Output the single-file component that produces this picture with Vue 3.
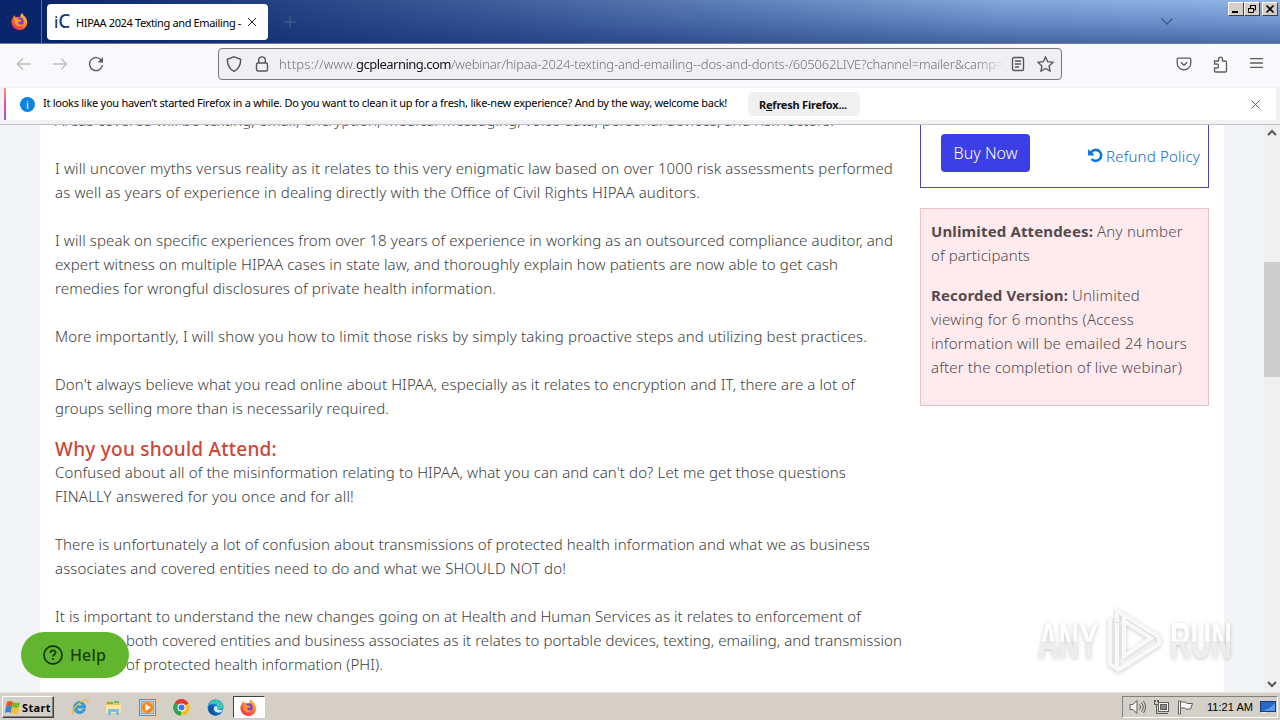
<template>
  <div class="screen">
    <header class="tabbar">
      <div class="pinned">
        <svg width="17" height="17" viewBox="0 0 24 24">
          <defs>
            <linearGradient id="fox" x1="1" y1="0" x2="0.2" y2="1">
              <stop offset="0" stop-color="#ffe04a" />
              <stop offset="0.45" stop-color="#ff8a22" />
              <stop offset="1" stop-color="#f5265c" />
            </linearGradient>
          </defs>
          <path d="M3 6l1-3 3 3c2-1 4-1 6 0 0-3 1-5 3-6 0 3 5 5 6 9 3 7-2 15-10 15S-1 16 1 10z" fill="url(#fox)" />
          <circle cx="12.5" cy="12" r="5.600" fill="#8440c8" />
          <path d="M4 8c3-1 5 0 7 1l4 1c-1 3-4 2-5 4 1 3 5 3 7 1-1 4-8 5-11 1-2-3-1-6-2-8z" fill="#ff9a2b" />
        </svg>
      </div>
      <div class="tab">
        <span class="favicon"><span class="favicon-i">i</span>C</span>
        <span class="tab-title" v-fit="165">HIPAA 2024 Texting and Emailing -</span>
        <svg class="tab-close" width="10" height="10" viewBox="0 0 10 10"><path d="M1 1l8 8M9 1L1 9" /></svg>
      </div>
      <svg class="new-tab" width="12" height="12" viewBox="0 0 12 12"><path d="M6 0v12M0 6h12" /></svg>
      <svg class="tabs-menu" width="14" height="9" viewBox="0 0 14 9"><path d="M1.500 1.500L7 7l5.500-5.500" /></svg>
      <div class="window-buttons">
        <span class="win-btn"><svg width="12" height="10" viewBox="0 0 12 10"><path d="M2 8h6" stroke-width="2" /></svg></span>
        <span class="win-btn"><svg width="12" height="10" viewBox="0 0 12 10"><path d="M4 1.500h6M4.500 1v3M9.500 1v5H7M2 4.500h6M2.500 4v4.500h5V4" /></svg></span>
        <span class="win-btn last"><svg width="12" height="10" viewBox="0 0 12 10"><path d="M2.500 1.500l7 7M9.500 1.500l-7 7" stroke-width="1.700" /></svg></span>
      </div>
    </header>

    <nav class="toolbar">
      <svg class="nav-icon disabled" width="16" height="16" viewBox="0 0 16 16"><path d="M15 8H1.500M7 2.500L1.500 8 7 13.500" /></svg>
      <svg class="nav-icon disabled" width="16" height="16" viewBox="0 0 16 16"><path d="M1 8h13.500M9 2.500L14.500 8 9 13.500" /></svg>
      <svg class="nav-icon" width="16" height="16" viewBox="0 0 16 16"><path d="M13.500 4.500A6.500 6.500 0 1 0 14.500 9" /><path d="M15 1v5.500H9.500z" class="solid" /></svg>
      <div class="urlbar">
        <svg width="16" height="16" viewBox="0 0 16 16"><path d="M8 .8l6.700 2.500c0 5.500-1.200 9.500-6.700 12C2.500 12.800 1.300 8.800 1.300 3.300z" /></svg>
        <svg class="lock" width="14" height="16" viewBox="0 0 14 16"><rect x="1.500" y="7" width="11" height="8" rx="1.500" /><path d="M3.700 7V4.200a3.300 3.300 0 0 1 6.600 0V7" /></svg>
        <div class="url">
          <span v-fit="77">https://www.</span><b><span v-fit="95">gcplearning.com</span></b><span v-fit="552">/webinar/hipaa-2024-texting-and-emailing--dos-and-donts-/605062LIVE?channel=mailer&amp;camp=</span>
        </div>
        <svg class="reader" width="14" height="16" viewBox="0 0 14 16"><rect x="1.500" y="1.500" width="11" height="13" rx="1.500" /><path d="M4 5h6M4 8h6M4 11h4" /></svg>
        <svg width="17" height="16" viewBox="0 0 17 16"><path d="M8.500 1l2.200 4.700 5.100.7-3.700 3.500.9 5.100-4.500-2.500L4 15l.9-5.100L1.200 6.400l5.100-.7z" /></svg>
      </div>
      <div class="tools">
        <svg width="16" height="14" viewBox="0 0 16 14"><path d="M2.500 1.200h11q1.300 0 1.300 1.300V6c0 9-13.600 9-13.600 0V2.500q0-1.300 1.300-1.300z" /><path d="M4.800 5.200L8 8.300l3.200-3.100" /></svg>
        <svg width="16" height="17" viewBox="0 0 16 17"><path d="M1.500 5h4V3.200a2 2 0 0 1 4 0V5h2.800q1.200 0 1.200 1.200v8.600q0 1.200-1.200 1.200H2.700q-1.200 0-1.200-1.200V12h2a2 2 0 0 0 0-4h-2z" /></svg>
        <svg width="13" height="12" viewBox="0 0 13 12"><path d="M0 .7h13M0 5h13M0 9.300h13" /></svg>
      </div>
    </nav>

    <div class="notice-wrap">
      <div class="notice">
        <span class="info">i</span>
        <span class="notice-text" v-fit="684">It looks like you haven’t started Firefox in a while. Do you want to clean it up for a fresh, like-new experience? And by the way, welcome back!</span>
        <button class="refresh"><span v-fit="88">R<u>e</u>fresh Firefox...</span></button>
        <svg class="notice-close" width="9" height="9" viewBox="0 0 9 9"><path d="M.5.5l8 8M8.500.5l-8 8" /></svg>
      </div>
    </div>

    <main class="viewport">
      <div class="page">
        <article class="article">
          <template v-for="(line, i) in lines" :key="i">
            <h3 v-if="line.heading"><span v-fit="line.width">{{ line.text }}</span></h3>
            <p v-else :class="{ 'para-end': line.end, indent: line.indent }"><span v-fit="line.width">{{ line.text }}</span></p>
          </template>
        </article>
        <aside class="sidebar">
          <div class="buy-box">
            <button class="buy"><span v-fit="64">Buy Now</span></button>
            <a class="refund">
              <svg width="15" height="15" viewBox="0 0 15 15"><path d="M3 4.500A5.500 5.500 0 1 1 3.500 11" /><path d="M0 1v6.500h6.500L4.500 5 2 3z" class="solid" /></svg>
              <span v-fit="94">Refund Policy</span>
            </a>
          </div>
          <div class="info-box">
            <p><strong><span v-fit="162">Unlimited Attendees:</span></strong> <span v-fit="86">Any number</span></p>
            <p class="gap"><span v-fit="99">of participants</span></p>
            <p><strong><span v-fit="137">Recorded Version:</span></strong> <span v-fit="68">Unlimited</span></p>
            <p><span v-fit="203">viewing for 6 months (Access</span></p>
            <p><span v-fit="256">information will be emailed 24 hours</span></p>
            <p><span v-fit="251">after the completion of live webinar)</span></p>
          </div>
        </aside>
      </div>
      <div class="scrollbar">
        <svg width="10" height="7" viewBox="0 0 10 7"><path d="M1 6l4-4 4 4" /></svg>
        <div class="thumb"></div>
        <svg class="down" width="10" height="7" viewBox="0 0 10 7"><path d="M1 1l4 4 4-4" /></svg>
      </div>

      <button class="help">
        <svg width="20" height="20" viewBox="0 0 20 20"><circle cx="10" cy="10" r="9" /><path d="M7.500 8c0-3.500 5.300-3.300 5.100-.3-.1 1.800-2.600 1.800-2.600 3.800" /><path d="M10 13v2" /></svg>
        <span v-fit="36">Help</span>
      </button>

      <div class="watermark">
        <span class="mark-word"><span class="mark-text">ANY</span></span>
        <svg width="58" height="66" viewBox="0 0 58 66"><path d="M4 10v46l7 5V15M11 14V3l42 26M18 8v40l27-18-27-17M53 29v7L14 61l-3-2" /></svg>
        <span class="mark-word"><span class="mark-text">RUN</span></span>
      </div>
    </main>

    <footer class="taskbar">
      <button class="start">
        <svg width="16" height="15" viewBox="0 0 16 15">
          <path d="M2 2q3-2 6 0L7 7Q4 5 1 7z" fill="#e8552b" />
          <path d="M8 2q4 2 7 0l-1 5q-3 2-7 0z" fill="#75b82e" />
          <path d="M1 7q3-2 6 0l-1 6q-3-2-6 0z" fill="#2f86dc" />
          <path d="M7 7q4 2 7 0l-1 6q-3 2-7 0z" fill="#f6c02a" />
        </svg>
        <span v-fit="29">Start</span>
      </button>
      <div class="apps">
        <span class="app">
          <svg width="18" height="18" viewBox="0 0 18 18">
            <path d="M14.500 10H5.500c.5 4 5 4 6.300 1.700h2.500C11 18 2.500 16 2.700 9.300 3 2 14.500 1 14.500 10zM5.700 7.800h6c-.7-3.300-5.200-3.300-6 0z" fill="#36a5e3" stroke="#2a90cd" stroke-width="1" />
            <path d="M2 16C-1 12 12 0 16.500 2c1 .5.500 2-.3 3" stroke="#eebb35" stroke-width="1.300" />
          </svg>
        </span>
        <span class="app">
          <svg width="17" height="17" viewBox="0 0 17 17">
            <path d="M1 4l1-2h5l1 2h7v10H1z" fill="#e9c662" />
            <path d="M2 4h6M9 3h5" stroke="#58a951" stroke-width="1.500" />
            <path d="M1 6h15v8H1z" fill="#fae7a0" />
            <path d="M3 16v-5q0-1 1-1h9q1 0 1 1v5h-3v-3H6v3z" fill="#80bddd" />
          </svg>
        </span>
        <span class="app">
          <svg width="17" height="17" viewBox="0 0 17 17">
            <rect x=".5" y=".5" width="16" height="16" fill="#b8dcf3" stroke="#4d93cc" />
            <rect x="2.500" y="2.500" width="12" height="12" fill="#e9c08c" stroke="#77addb" />
            <circle cx="8.500" cy="8.500" r="5.500" fill="#f38a16" />
            <path d="M6.500 5l5.500 3.500L6.500 12z" fill="#fff" />
          </svg>
        </span>
        <span class="app">
          <svg width="17" height="17" viewBox="0 0 17 17">
            <path d="M8.500 8.500L1.500 4A8 8 0 0 1 15.500 4.500z" fill="#e33b2e" />
            <path d="M8.500 8.500L1.500 4A8 8 0 0 0 8 16.500l4-6z" fill="#2da44e" />
            <path d="M8.500 8.500l7-4A8 8 0 0 1 8 16.500z" fill="#fbc116" />
            <circle cx="8.500" cy="8.500" r="4" fill="#fff" />
            <circle cx="8.500" cy="8.500" r="3" fill="#3e79e6" />
          </svg>
        </span>
        <span class="app">
          <svg width="17" height="17" viewBox="0 0 17 17">
            <circle cx="8.500" cy="8.500" r="8" fill="#1676c8" />
            <path d="M1 7C2-1 16-1 16.500 7c.3 4-5.500 4.500-6.500 2.500C12 5 5 3 1 7z" fill="#3fc5b4" />
            <path d="M10 9.500c.7 2 4.500 2.300 6 .7-.4 3-3.500 4-6 3-3-1-4-4-2-6 2-.5 3 1 2 2.300z" fill="#d4e9ef" />
            <path d="M6.500 7.500c-2 5 2 9 7 7.500-6 4-13-1-12-7 1-2 3-2 5-.5z" fill="#1553a0" />
          </svg>
        </span>
        <span class="app active">
          <svg width="17" height="17" viewBox="0 0 24 24">
            <path d="M3 6l1-3 3 3c2-1 4-1 6 0 0-3 1-5 3-6 0 3 5 5 6 9 3 7-2 15-10 15S-1 16 1 10z" fill="url(#fox)" />
            <circle cx="12.500" cy="12" r="5.600" fill="#8440c8" />
            <path d="M4 8c3-1 5 0 7 1l4 1c-1 3-4 2-5 4 1 3 5 3 7 1-1 4-8 5-11 1-2-3-1-6-2-8z" fill="#ff9a2b" />
          </svg>
        </span>
      </div>
      <div class="tray">
        <svg width="17" height="14" viewBox="0 0 17 14"><path d="M1 4.500h3l4-4v13l-4-4H1z" class="white" /><path d="M10.500 4.500q2 2.500 0 5M12.500 2.500q3.500 4.500 0 9M14.500 1q4 6 0 12" /></svg>
        <svg width="17" height="16" viewBox="0 0 17 16"><rect x="5.500" y="3.500" width="10" height="9" class="white" /><rect x="7.500" y="5.500" width="6" height="5" class="screen-fill" /><path d="M8 14.500h7" /><path d="M1.500 1v4.500h4V1M2.500 1v2M4.500 1v2M3.500 6v8.500H8" /></svg>
        <svg width="17" height="15" viewBox="0 0 17 15"><path d="M1.500 1v13h2V1zM3.500 2h5l1.500 1.500h5.500L13.500 9H9L7.500 8h-4z" class="white" /></svg>
        <span class="clock" v-fit="46">11:21 AM</span>
        <svg width="16" height="14" viewBox="0 0 16 14"><rect x=".5" y="1.500" width="15" height="10" fill="#2769c9" stroke="#173c7d" /><path d="M1 11q8-1 14-8v8z" fill="#5a9ae9" stroke="none" /><path d="M2 12.500h4" stroke="#e7eef8" /></svg>
      </div>
    </footer>
  </div>
</template>

<script setup>
import { ref } from 'vue'

// spreads the letters of a line so that it takes the given width
const vFit = {
  mounted(el, { value }) {
    const range = document.createRange()
    range.selectNodeContents(el)
    const natural = range.getBoundingClientRect().width
    el.style.letterSpacing = (value - natural) / el.textContent.length + 'px'
  },
}

const lines = ref([
  { text: 'Areas covered will be texting, email, encryption, medical messaging, voice data, personal devices, and risk factors.', width: 779, end: true },
  { text: 'I will uncover myths versus reality as it relates to this very enigmatic law based on over 1000 risk assessments performed', width: 838 },
  { text: 'as well as years of experience in dealing directly with the Office of Civil Rights HIPAA auditors.', width: 645, end: true },
  { text: 'I will speak on specific experiences from over 18 years of experience in working as an outsourced compliance auditor, and', width: 838 },
  { text: 'expert witness on multiple HIPAA cases in state law, and thoroughly explain how patients are now able to get cash', width: 783 },
  { text: 'remedies for wrongful disclosures of private health information.', width: 441, end: true },
  { text: 'More importantly, I will show you how to limit those risks by simply taking proactive steps and utilizing best practices.', width: 812, end: true },
  { text: "Don't always believe what you read online about HIPAA, especially as it relates to encryption and IT, there are a lot of", width: 800 },
  { text: 'groups selling more than is necessarily required.', width: 334 },
  { text: 'Why you should Attend:', width: 222, heading: true },
  { text: "Confused about all of the misinformation relating to HIPAA, what you can and can't do? Let me get those questions", width: 791 },
  { text: 'FINALLY answered for you once and for all!', width: 299, end: true },
  { text: 'There is unfortunately a lot of confusion about transmissions of protected health information and what we as business', width: 815 },
  { text: 'associates and covered entities need to do and what we SHOULD NOT do!', width: 511, end: true },
  { text: 'It is important to understand the new changes going on at Health and Human Services as it relates to enforcement of', width: 806 },
  { text: 'both covered entities and business associates as it relates to portable devices, texting, emailing, and transmission', width: 776, indent: true },
  { text: 'of protected health information (PHI).', width: 257, indent: true },
])
</script>

<style>
body {
  overflow: hidden;
}
</style>

<style scoped>
.screen {
  width: 1280px;
  height: 720px;
  display: flex;
  flex-direction: column;
  overflow: hidden;
  font-family: "Noto Sans", "Open Sans", sans-serif;
  background: #f9f9fb;
}

svg {
  display: block;
  flex: none;
  fill: none;
}

button {
  border: 0;
  font-family: inherit;
}

span {
  white-space: nowrap;
}

.tabbar {
  height: 44px;
  flex: none;
  display: flex;
  align-items: center;
  background:
    linear-gradient(90deg, #0a246a 40px, rgba(10, 36, 106, 0.6) 500px, rgba(10, 36, 106, 0.1) 1000px, transparent),
    linear-gradient(180deg, #92b6e6, #7095cf 50%, #4c6ca8);
  border-bottom: 1px solid #6c7a9c;
  box-sizing: border-box;
}

.pinned {
  width: 42px;
  height: 43px;
  background: #0b256b;
  border-right: 1px solid #5c6f9d;
  display: flex;
  align-items: center;
  justify-content: center;
  padding-right: 2px;
  box-sizing: border-box;
}

.tab {
  width: 221px;
  height: 36px;
  margin-left: 5px;
  padding: 0 11px 0 7px;
  background: #fff;
  border-radius: 4px;
  display: flex;
  align-items: center;
  box-sizing: border-box;
}

.favicon {
  width: 22px;
  color: #1c4076;
  font-size: 19px;
  line-height: 20px;
  font-weight: 500;
}

.favicon-i {
  font-size: 16px;
}

.tab-title {
  flex: 1;
  padding-top: 1px;
  font-size: 11px;
  color: #000;
}

.tab-close {
  stroke: #222;
}

.new-tab {
  margin-left: 16px;
  stroke: #4f6489;
}

.tabs-menu {
  margin-left: auto;
  stroke: #3d5f8f;
  stroke-width: 1.5;
}

.window-buttons {
  display: flex;
  align-self: flex-start;
  margin: 2px 2px 0 54px;
}

.win-btn {
  width: 16px;
  height: 14px;
  box-sizing: border-box;
  background: #d4d0c8;
  border: 1px solid;
  border-color: #fff #404040 #404040 #fff;
  display: flex;
  align-items: center;
  justify-content: center;
}

.win-btn.last {
  margin-left: 2px;
}

.win-btn svg {
  stroke: #000;
}

.toolbar {
  height: 43px;
  flex: none;
  display: flex;
  align-items: center;
  padding: 0 0 3px 16px;
  box-sizing: border-box;
  background: #f9f9fb;
}

.nav-icon {
  margin-right: 20px;
  stroke: #5b5b66;
  stroke-width: 1.4;
}

.nav-icon.disabled {
  stroke: #bdbdc2;
}

.solid {
  fill: #5b5b66;
  stroke: none;
}

.urlbar {
  width: 844px;
  height: 32px;
  margin-left: 94px;
  padding: 0 7px;
  display: flex;
  align-items: center;
  box-sizing: border-box;
  border: 1px solid #77777d;
  border-radius: 4px;
  background: #f0f0f4;
}

.urlbar svg {
  stroke: #55555e;
  stroke-width: 1.4;
}

.lock {
  margin: 0 10px 0 13px;
}

.url {
  flex: 1;
  display: flex;
  font-size: 13px;
  font-weight: 300;
  color: #707078;
  -webkit-mask-image: linear-gradient(90deg, #000 695px, transparent 729px);
  mask-image: linear-gradient(90deg, #000 695px, transparent 729px);
}

.url b {
  font-weight: 400;
  color: #15141a;
}

.reader {
  margin-right: 12px;
}

.tools {
  display: flex;
  align-items: center;
  gap: 21px;
  margin-left: 114px;
}

.tools svg {
  stroke: #5b5b66;
  stroke-width: 1.3;
}

.notice-wrap {
  height: 38px;
  flex: none;
  padding: 1px 4px 4px;
  background: #f2f2f4;
  border-bottom: 1px solid #bfbfc4;
  box-sizing: border-box;
}

.notice {
  height: 32px;
  display: flex;
  align-items: center;
  background: #fff;
  border-left: 2px solid;
  border-image: linear-gradient(180deg, #f69a69, #e850a0, #9059d0) 1;
}

.info {
  width: 15px;
  height: 15px;
  margin: 0 8px 0 14px;
  border-radius: 50%;
  background: #0a84e5;
  color: #fff;
  font-size: 11px;
  line-height: 15px;
  text-align: center;
}

.notice-text {
  width: 684px;
  padding-bottom: 3px;
  font-size: 11px;
  color: #000;
}

.refresh {
  width: 112px;
  height: 24px;
  margin-left: 21px;
  padding: 0 2px 0 0;
  border-radius: 4px;
  background: #f0f0f1;
  font-size: 11px;
  font-weight: 700;
  color: #111;
}

.notice-close {
  margin: 0 16px 0 auto;
  stroke: #5b5b66;
}

.viewport {
  position: relative;
  height: 567px;
  flex: none;
  display: flex;
  overflow: hidden;
  background: #f2f4f8;
}

.page {
  width: 1184px;
  margin-left: 40px;
  display: flex;
  align-items: flex-start;
  background: #fff;
}

.article {
  width: 880px;
  padding-left: 15px;
  margin-top: -17px;
  box-sizing: border-box;
}

p {
  margin: 0;
  height: 24px;
  font-size: 15px;
  line-height: 24px;
  font-weight: 300;
  color: #3c3c40;
}

.para-end {
  margin-bottom: 24px;
}

.indent {
  padding-left: 71px;
}

h3 {
  height: 23px;
  margin: 17px 0 0;
  font-size: 19px;
  line-height: 24px;
  font-weight: 500;
  color: #d04536;
}

.sidebar {
  width: 289px;
}

.buy-box {
  height: 63px;
  padding: 9px 8px 0 20px;
  display: flex;
  justify-content: space-between;
  align-items: flex-start;
  box-sizing: border-box;
  border: 1px solid #4b4ba6;
  border-top: 0;
}

.buy {
  width: 89px;
  height: 38px;
  padding: 0;
  border-radius: 4px;
  background: #3d3fe6;
  color: #fff;
  font-size: 16px;
  font-weight: 300;
}

.refund {
  display: flex;
  align-items: center;
  gap: 3px;
  height: 38px;
  padding-top: 5px;
  box-sizing: border-box;
  font-size: 15px;
  font-weight: 300;
  color: #1768c0;
}

.refund svg {
  stroke: #0878df;
  stroke-width: 2.6;
}

.refund .solid {
  fill: #0878df;
  stroke: none;
}

.info-box {
  height: 198px;
  margin-top: 20px;
  padding: 10px;
  box-sizing: border-box;
  border: 1px solid #f0c0c8;
  background: #ffebed;
}

.info-box p {
  color: #55494c;
}

.info-box .gap {
  margin-bottom: 16px;
}

strong {
  font-weight: 700;
}

.scrollbar {
  width: 16px;
  margin-left: auto;
  display: flex;
  flex-direction: column;
  align-items: center;
  padding: 4px 0;
  box-sizing: border-box;
  background: #f0f0f0;
}

.scrollbar svg {
  stroke: #55555a;
  stroke-width: 2;
}

.thumb {
  width: 16px;
  height: 115px;
  margin-top: 126px;
  background: #cdcdcd;
}

.down {
  margin-top: auto;
}

.help {
  position: absolute;
  left: 21px;
  bottom: 14px;
  width: 108px;
  height: 46px;
  padding: 0 0 0 22px;
  display: flex;
  align-items: center;
  gap: 7px;
  border-radius: 23px;
  background: #62b62f;
  color: #173c09;
  font-size: 16px;
  font-weight: 500;
}

.help svg {
  stroke: #173c09;
  stroke-width: 1.8;
}

.watermark {
  position: absolute;
  left: 1038px;
  top: 483px;
  display: flex;
  align-items: center;
  gap: 6px;
  color: #fff;
  font-family: "Liberation Sans", Arial, sans-serif;
  font-size: 50px;
  font-weight: 700;
  line-height: 66px;
  opacity: 0.85;
  filter: drop-shadow(0 1px 2px rgba(0, 0, 0, 0.25));
}

.mark-word {
  width: 62px;
}

.mark-text {
  display: inline-block;
  transform: scaleX(0.57);
  transform-origin: left;
  background: linear-gradient(180deg, #fff 50%, #ececee 50%);
  -webkit-background-clip: text;
  background-clip: text;
  color: transparent;
}

.watermark svg {
  stroke: #f8f8f9;
  stroke-width: 4;
}

.taskbar {
  height: 28px;
  flex: none;
  display: flex;
  align-items: center;
  padding: 1px 2px 0;
  box-sizing: border-box;
  border-top: 1px solid #e9e7e2;
  background: #d4d0c8;
}

.start {
  width: 52px;
  height: 22px;
  padding: 0 2px;
  display: flex;
  align-items: center;
  gap: 1px;
  box-sizing: border-box;
  border: 1px solid;
  border-color: #fff #404040 #404040 #fff;
  box-shadow: inset -1px -1px #808080;
  background: #d4d0c8;
  font-size: 11px;
  font-weight: 700;
  color: #000;
}

.apps {
  display: flex;
  align-items: center;
  margin-left: 9px;
}

.app {
  width: 33.8px;
  height: 22px;
  display: flex;
  align-items: center;
  justify-content: center;
  box-sizing: border-box;
}

.app.active {
  width: 32px;
  margin-left: 1px;
  border: 1px solid;
  border-color: #404040 #fff #fff #404040;
  background: #fff;
}

.tray {
  width: 156px;
  height: 22px;
  margin-left: auto;
  padding: 0 1px 0 6px;
  display: flex;
  align-items: center;
  gap: 7px;
  box-sizing: border-box;
  border: 1px solid;
  border-color: #808080 #fff #fff #808080;
}

.tray svg {
  stroke: #5d5d5d;
}

.white {
  fill: #f8f8f8;
}

.screen-fill {
  fill: #8c8c8c;
}

.clock {
  margin-left: auto;
  font-family: "Liberation Sans", Arial, sans-serif;
  font-size: 11px;
  color: #000;
}
</style>
